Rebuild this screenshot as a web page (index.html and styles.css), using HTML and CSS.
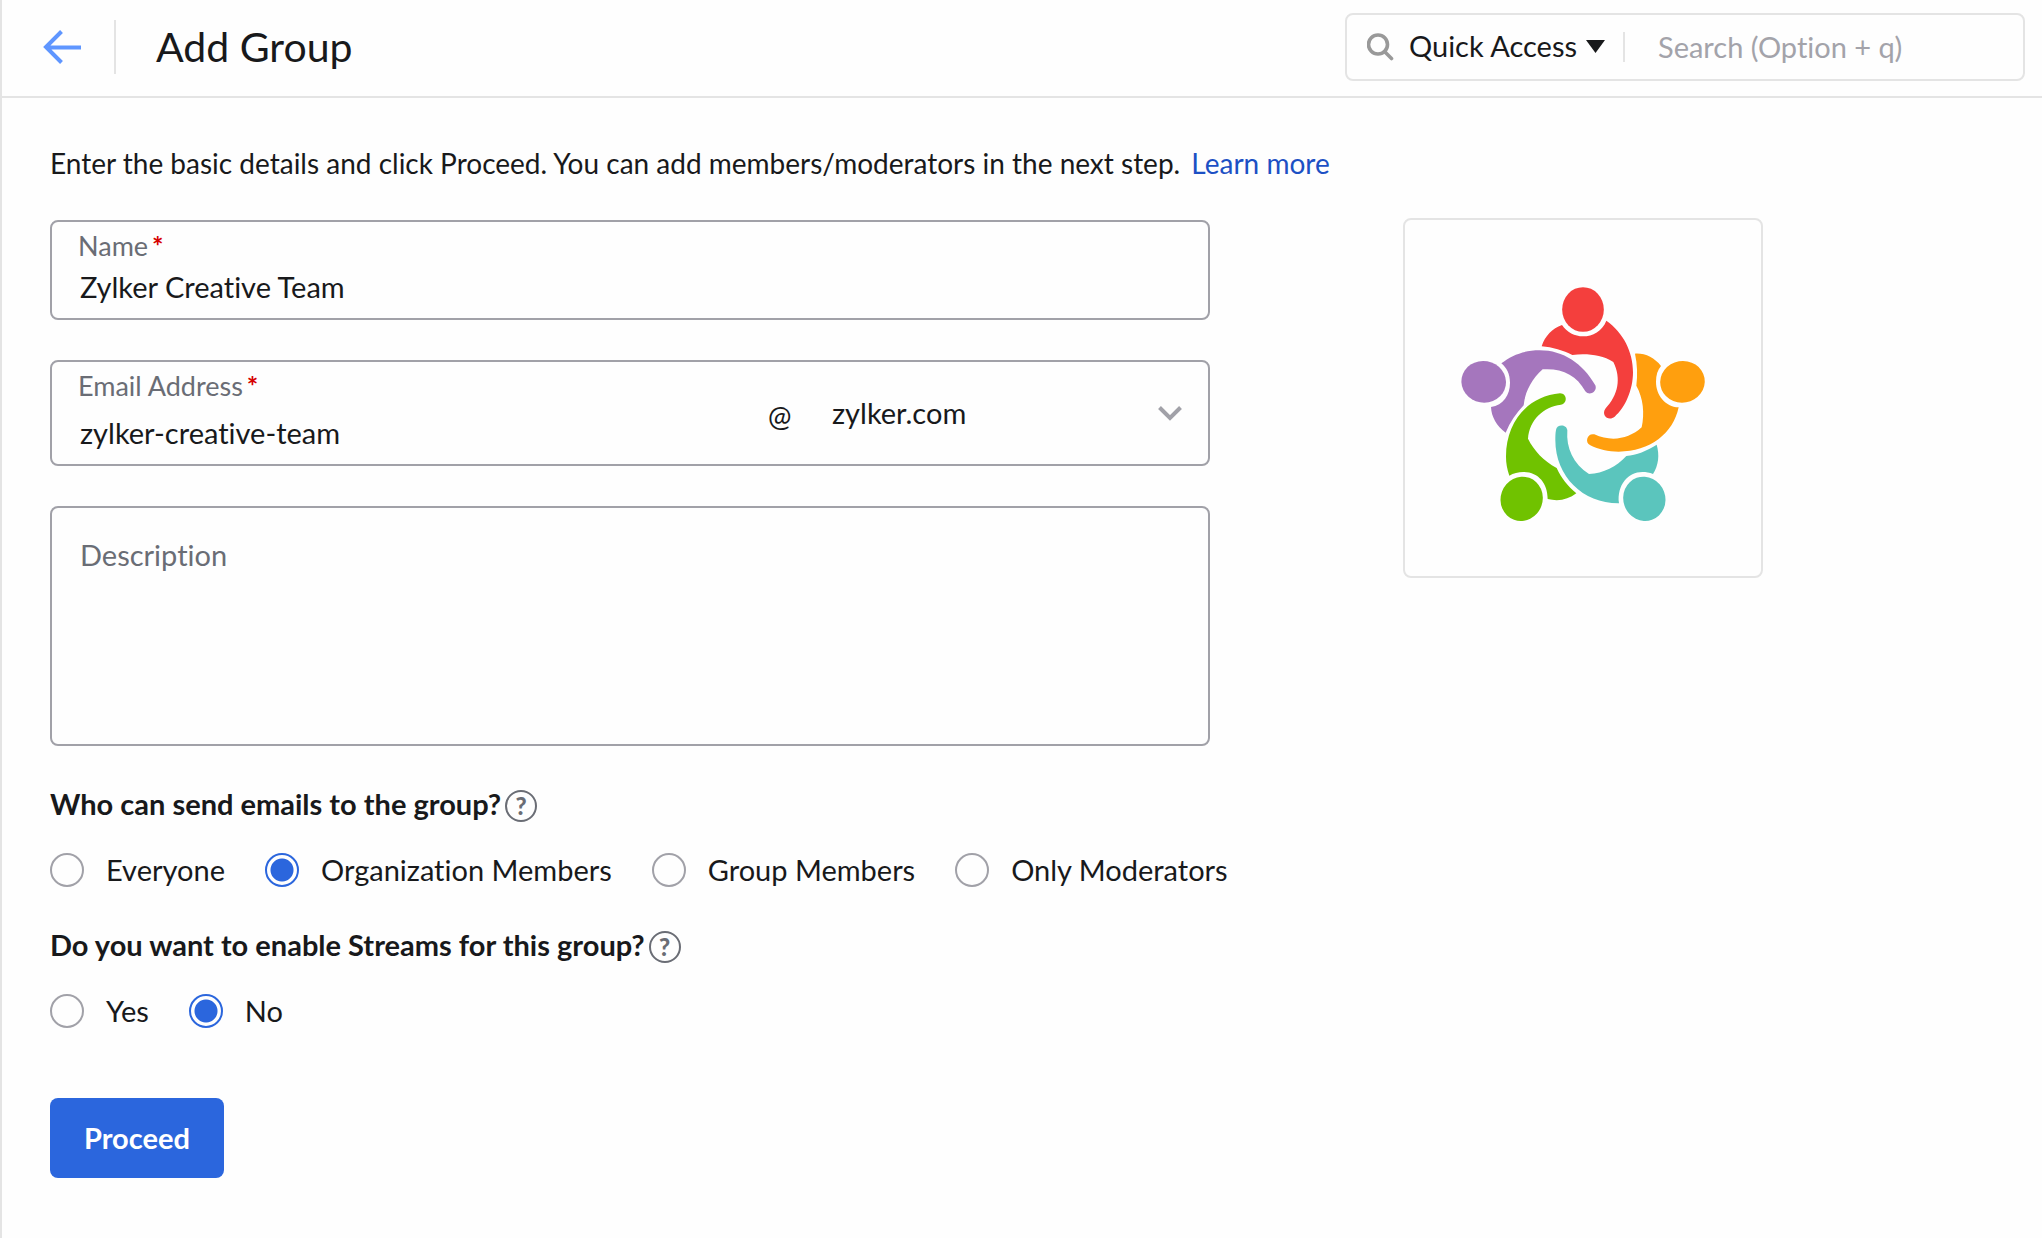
FILE: index.html
```html
<!DOCTYPE html>
<html lang="en">
<head>
<meta charset="utf-8">
<title>Add Group</title>
<link rel="stylesheet" href="styles.css">
</head>
<body>
<header class="topbar">
  <a class="back" href="#" aria-label="Back">
    <svg width="38" height="34" viewBox="0 0 38 34" fill="none" stroke="currentColor" stroke-width="4"><path d="M38 17.500H3M18.500 1.500 3 17l15.500 15.500"/></svg>
  </a>
  <h1 class="title">Add Group</h1>
  <div class="search">
    <svg class="search-icon" width="28" height="28" viewBox="0 0 28 28" fill="none" stroke="currentColor" stroke-width="3.600"><circle cx="11" cy="11.500" r="9.500"/><path d="m17.500 18.500 7 7" stroke-linecap="round"/></svg>
    <button class="quick" type="button">Quick Access
      <svg width="19" height="13" viewBox="0 0 19 13" fill="currentColor"><path d="M0 0h19L9.500 13z"/></svg>
    </button>
    <input class="search-input" type="text" placeholder="Search (Option + q)" aria-label="Search">
  </div>
</header>
<main class="main">
  <p class="intro">Enter the basic details and click Proceed. You can add members/moderators in the next step. <a class="link" href="#">Learn more</a></p>
  <div class="columns">
    <form class="form">
      <div class="field">
        <label class="label" for="name">Name<span class="star">*</span></label>
        <input class="value" id="name" type="text" value="Zylker Creative Team">
      </div>
      <div class="field field-split">
        <div class="local">
          <label class="label" for="email">Email Address<span class="star">*</span></label>
          <input class="value value-tall" id="email" type="text" value="zylker-creative-team">
        </div>
        <span class="at">@</span>
        <div class="domain">
          <select class="domain-select" aria-label="Domain"><option>zylker.com</option></select>
          <svg class="chevron" width="24" height="15" viewBox="0 0 24 15" fill="none" stroke="currentColor" stroke-width="4"><path d="m1.500 1.500 10.500 10.500 10.500-10.500"/></svg>
        </div>
      </div>
      <textarea class="field description" placeholder="Description" aria-label="Description"></textarea>

      <fieldset class="question">
        <legend class="legend">Who can send emails to the group? <button class="help" type="button" aria-label="Help">?</button></legend>
        <div class="options">
          <label class="option"><input class="radio" type="radio" name="senders">Everyone</label>
          <label class="option"><input class="radio" type="radio" name="senders" checked>Organization Members</label>
          <label class="option"><input class="radio" type="radio" name="senders">Group Members</label>
          <label class="option"><input class="radio" type="radio" name="senders">Only Moderators</label>
        </div>
      </fieldset>
      <fieldset class="question">
        <legend class="legend">Do you want to enable Streams for this group? <button class="help" type="button" aria-label="Help">?</button></legend>
        <div class="options">
          <label class="option"><input class="radio" type="radio" name="streams">Yes</label>
          <label class="option"><input class="radio" type="radio" name="streams" checked>No</label>
        </div>
      </fieldset>
      <button class="proceed" type="button">Proceed</button>
    </form>
    <div class="picture">
      <svg class="logo" viewBox="45 60 1068 1068" role="img" aria-label="Group picture">
        <g fill="#f43f3d">
          <ellipse cx="579" cy="328.500" rx="62.500" ry="67"/>
          <path d="M516 375C530 397 555 409 579 409C608 409 637 393 649 362C700 398 729 455 729 517C729 570 705 624 674 650C655 665 633 645 646 626C686 585 694 534 670 486C634 464 590 460 547 465C520 451 487 442 455 439C465 408 487 385 516 375Z"/>
        </g>
        <g fill="#ff9f0e">
          <ellipse cx="877.500" cy="545.500" rx="67" ry="62.500" transform="rotate(-10 877.500 545.500)"/>
          <path d="M735 461C765 459 793 473 813 498C803 510 798 525 798 545C798 585 825 620 866 622C850 700 780 755 686 755C655 755 625 748 601 736C582 726 593 698 613 703C663 726 716 718 755 682C764 640 760 595 739 557C743 525 742 493 735 461Z"/>
        </g>
        <g fill="#a576bd">
          <ellipse cx="281" cy="545.500" rx="67" ry="62.500" transform="rotate(10 281 545.500)"/>
          <path d="M334 490C365 466 400 451 449 451C520 451 578 490 616 556C623 573 600 590 586 574C560 525 515 504 458 508C425 538 405 575 401 616C378 640 360 667 347 698C320 678 304 650 303 621C340 615 360 585 360 548C360 522 350 503 334 490Z"/>
        </g>
        <g fill="#70c200">
          <ellipse cx="395" cy="896.500" rx="63" ry="67" transform="rotate(20 395 896.500)"/>
          <path d="M510 580C532 580 533 611 513 614C460 620 418 660 414 716C432 752 460 782 500 804C514 834 533 858 559 880C535 899 505 905 473 897C473 850 445 816 400 816C385 816 370 820 358 827C351 805 348 790 348 770C348 665 415 588 510 580Z"/>
        </g>
        <g fill="#5bc5bd">
          <ellipse cx="763" cy="896.500" rx="63" ry="67" transform="rotate(-20 763 896.500)"/>
          <path d="M498 690C500 672 530 672 532 691C528 745 550 792 597 822C640 820 680 800 709 768C740 765 770 753 800 734C809 765 806 795 789 822C779 818 768 816 757 816C715 816 680 855 687 910C580 911 496 830 496 720C496 710 496 700 498 690Z"/>
        </g>
      </svg>
    </div>
  </div>
</main>
</body>
</html>
```
FILE: styles.css
```css
* { box-sizing: border-box; }

body {
  margin: 0;
  min-height: 100vh;
  border-left: 2px solid #e4e4e4;
  background: #fefefe;
  color: #18191b;
  font: 29px/40px Lato, "Open Sans", sans-serif;
  font-variant-ligatures: none;
}

button, input, select, textarea {
  margin: 0;
  font: inherit;
  font-variant-ligatures: none;
  color: inherit;
}
svg { display: block; flex: none; }

.topbar {
  display: flex;
  align-items: center;
  height: 98px;
  padding: 0 17px 2px 41px;
  border-bottom: 2px solid #e4e4e4;
}
.back {
  display: flex;
  align-items: center;
  height: 54px;
  padding-right: 33px;
  border-right: 2px solid #e4e4e4;
  color: #5f96ff;
}
.title { margin: 0 auto 0 40px; font-size: 41px; line-height: 48px; font-weight: 400; }

.search {
  display: flex;
  align-items: center;
  width: 680px;
  height: 68px;
  padding: 0 20px;
  border: 2px solid #e4e4e4;
  border-radius: 8px;
}
.search-icon { color: #999; }
.quick {
  display: flex;
  align-items: center;
  gap: 9px;
  height: 30px;
  padding: 0 18px 2px 14px;
  border: 0;
  border-right: 2px solid #e4e4e4;
  background: none;
}
.search-input { flex: 1; min-width: 0; padding: 0 0 0 33px; border: 0; background: none; outline: 0; }
.search-input::placeholder { color: #a3a3aa; }

.main { padding: 45px 48px 60px; }
.intro { margin: 0 0 35px; font-size: 28px; }
.link { margin-left: 4px; color: #1c50c4; text-decoration: none; }

.columns { display: grid; grid-template-columns: minmax(0, 1160px) 360px; gap: 193px; align-items: start; }
.form { display: flex; flex-direction: column; gap: 40px; padding-top: 2px; }

.field {
  display: flex;
  flex-direction: column;
  width: 100%;
  padding: 8px 26px;
  border: 2px solid #a1a1a8;
  border-radius: 8px;
  background: none;
}
.label { display: block; font-size: 27px; line-height: 32px; color: #6a6d75; }
.star { margin-left: 4px; color: #d60000; font-weight: 700; }
.value { display: block; width: 100%; height: 48px; padding: 0 0 0 2px; border: 0; background: none; outline: 0; }
.value-tall { height: 60px; }
.field-split { flex-direction: row; padding-bottom: 2px; }
.local { flex: 1; }
.at { width: 64px; align-self: center; font-size: 28px; }
.domain { position: relative; display: flex; align-items: center; width: 350px; padding-bottom: 6px; }
.domain-select { width: 100%; padding: 0; border: 0; appearance: none; background: none; outline: 0; }
.chevron { position: absolute; right: 0; color: #a1a1a8; pointer-events: none; }
.description { height: 240px; padding: 27px 28px; resize: none; outline: 0; }
.description::placeholder { color: #6a6d75; opacity: 1; }

.question { min-width: 0; margin: 0 -80px 0 0; padding: 0; border: 0; }
.question + .question { margin-top: -3px; }
.legend { display: flex; align-items: center; gap: 4px; padding: 0; font-weight: 700; line-height: 36px; }
.help {
  width: 32px;
  height: 32px;
  margin-top: 4px;
  padding: 0;
  border: 2px solid #6a6d75;
  border-radius: 50%;
  background: none;
  color: #6a6d75;
  font-size: 24px;
  font-weight: 900;
  line-height: 28px;
}
.options { display: flex; flex-wrap: wrap; gap: 40px; padding-top: 28px; }
.option { display: flex; align-items: center; gap: 22px; }
.radio {
  appearance: none;
  width: 34px;
  height: 34px;
  border: 2px solid #a1a1a8;
  border-radius: 50%;
}
.radio:checked { border-color: #2b66dd; background: radial-gradient(circle, #2b66dd 11px, transparent 12px); }

.proceed {
  align-self: flex-start;
  margin-top: 27px;
  padding: 20px 34px;
  border: 0;
  border-radius: 8px;
  background: #2b66dd;
  color: #fff;
  font-weight: 700;
}

.picture { border: 2px solid #e4e4e4; border-radius: 8px; }
.logo { width: 100%; }
```
